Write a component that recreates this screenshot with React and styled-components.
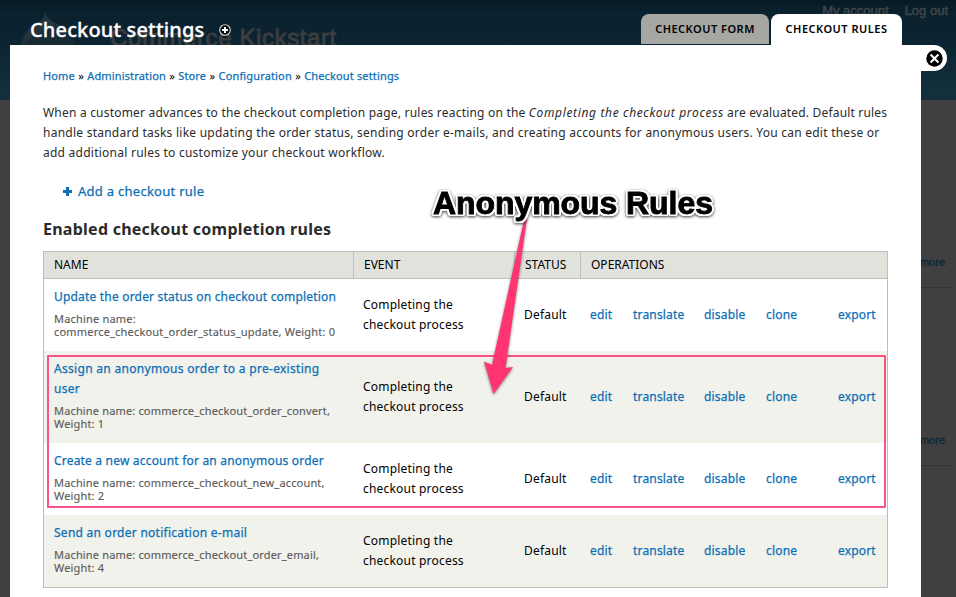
import React from 'react';
import styled, { createGlobalStyle } from 'styled-components';

const Global = createGlobalStyle`
  * { box-sizing: border-box; }
  body { margin: 0; font-family: "Noto Sans", "Open Sans", sans-serif; font-size: 12px; color: #000; overflow: hidden; }
`;

const Screen = styled.div`
  position: relative;
  width: 956px;
  height: 597px;
  overflow: hidden;
  background: #404040;
`;

/* Dimmed site behind the overlay */
const Backdrop = styled.div`
  position: absolute;
  inset: 0;
  font-family: "Liberation Sans", Arial, sans-serif;
`;
const SiteHeader = styled.div`
  position: relative;
  height: 100px;
  background: linear-gradient(#051a25 0, #0a212e 12px, #0c2533 45px, #14303f 100px);
`;
const SiteLogo = styled.svg`
  position: absolute;
  left: 18px;
  top: 11px;
`;
const SiteName = styled.div`
  position: absolute;
  left: 110px;
  top: 24px;
  font-size: 24px;
  line-height: 28px;
  letter-spacing: 0.6px;
  -webkit-text-stroke: 0.9px #3b3d3e;
  color: #3b3d3e;
  white-space: nowrap;
`;
const UserMenu = styled.div`
  position: absolute;
  right: 8px;
  top: 3px;
  display: flex;
  gap: 16px;
  font-size: 13px;
  line-height: 15px;
  color: #43484b;
  -webkit-text-stroke: 0.4px #43484b;
`;
const ReadMore = styled.div`
  position: absolute;
  left: 880px;
  top: ${(p) => p.$top}px;
  width: 70px;
  height: 32px;
  padding-right: 5px;
  border-bottom: 1px solid #333;
  text-align: right;
  font-size: 11px;
  line-height: 12px;
  color: #0b2636;
  -webkit-text-stroke: 0.3px #0b2636;
`;

/* Overlay window */
const Overlay = styled.div`
  position: absolute;
  left: 10px;
  top: 0;
  width: 937px;
  height: 597px;
  display: flex;
  flex-direction: column;
`;
const TitleBar = styled.header`
  display: flex;
  justify-content: space-between;
  height: 45px;
  padding: 14px 45px 0 20px;
`;
const TitleGroup = styled.div`
  display: flex;
  align-items: center;
  gap: 15px;
  height: 31px;
`;
const Title = styled.h1`
  margin: 0;
  font-size: 20px;
  line-height: 31px;
  font-weight: 500;
  letter-spacing: 0.14px;
  -webkit-text-stroke: 0.3px #fff;
  color: #fff;
`;
const Tabs = styled.nav`
  display: flex;
  gap: 2px;
`;
const Tab = styled.div`
  width: ${(p) => p.$width}px;
  height: ${(p) => (p.$active ? 31 : 30)}px;
  border-radius: 8px 8px 0 0;
  background: ${(p) => (p.$active ? '#fff' : '#a6a7a2')};
  text-align: center;
  font-size: 11px;
  line-height: 30px;
  font-weight: 600;
  letter-spacing: 0.5px;
  white-space: nowrap;
`;
const Body = styled.div`
  display: flex;
  flex: 1;
  align-items: flex-start;
`;
const Panel = styled.main`
  width: 911px;
  height: 552px;
  padding: 21px 33px 0;
  background: #fff;
`;
const CloseTab = styled.button`
  display: flex;
  align-items: center;
  justify-content: center;
  width: 26px;
  height: 26px;
  padding: 0;
  border: 0;
  border-radius: 0 13px 13px 0;
  background: #fff;
`;
const Breadcrumb = styled.nav`
  display: flex;
  gap: 3.3px;
  font-size: 11px;
  line-height: 20px;
  letter-spacing: 0.15px;
  white-space: nowrap;
`;
const Link = styled.a`
  color: #0d6fb6;
  -webkit-text-stroke: 0.25px #0d6fb6;
  white-space: nowrap;
`;
const Intro = styled.p`
  margin: 17px 0 0;
  line-height: 20px;
  color: #2b2b2b;
  white-space: nowrap;
  letter-spacing: 0.245px;
`;
const Emphasis = styled.em`
  letter-spacing: 0.65px;
`;
const Wide = styled.span`
  letter-spacing: ${(p) => p.$spacing}px;
`;
const AddAction = styled.div`
  display: flex;
  align-items: center;
  gap: 6px;
  margin: 18px 0 0 20px;
  height: 20px;
  font-size: 13px;
  letter-spacing: 0.27px;
`;
const Heading = styled.h3`
  margin: 17px 0 0;
  font-size: 16px;
  line-height: 22px;
  font-weight: 700;
  letter-spacing: 0.25px;
  color: #2b2b2b;
`;
const Table = styled.div`
  margin-top: 11px;
  width: 845px;
  border: 1px solid #bebfb9;
`;
const Row = styled.div`
  display: grid;
  grid-template-columns: 310px 161px 66px 1fr;
  align-items: center;
  background: ${(p) => (p.$striped ? '#f1f2eb' : '#fff')};
`;
const HeaderRow = styled(Row)`
  height: 27px;
  background: #e1e2dc;
  border-bottom: 1px solid #bebfb9;
  align-items: stretch;
`;
const HeaderCell = styled.div`
  padding-left: 10px;
  line-height: 26px;
  border-right: ${(p) => (p.$last ? '0' : '1px solid #bebfb9')};
`;
const NameCell = styled.div`
  padding: 8px 0 13px 10px;
`;
const RuleLink = styled(Link)`
  display: block;
  line-height: 20px;
  letter-spacing: ${(p) => p.$spacing}px;
`;
const Machine = styled.div`
  margin-top: 5px;
  font-size: 11px;
  line-height: 13px;
  letter-spacing: ${(p) => p.$spacing}px;
  color: #5c5c5a;
  -webkit-text-stroke: 0.15px #5c5c5a;
  white-space: pre;
`;
const Cell = styled.div`
  padding-left: 9px;
  line-height: 20px;
  letter-spacing: 0.2px;
  white-space: pre;
`;
const Operations = styled.div`
  display: grid;
  grid-template-columns: 43px 71px 62px 72px auto;
  padding-left: 9px;
  line-height: 20px;
  letter-spacing: 0.18px;
`;

/* Annotations drawn over the page */
const Highlight = styled.div`
  position: absolute;
  left: 47px;
  top: 355px;
  width: 839px;
  height: 153px;
  border: 2px solid #f65586;
  border-radius: 1px;
`;
const Arrow = styled.svg`
  position: absolute;
  left: 470px;
  top: 200px;
  overflow: visible;
  filter: drop-shadow(0 1px 1.5px rgba(0, 0, 0, 0.5));
`;
const Callout = styled.div`
  position: absolute;
  left: 433px;
  top: 184px;
  font: 700 32px/38px "Liberation Sans", Arial, sans-serif;
  letter-spacing: -0.07px;
  white-space: nowrap;
  color: #000;
  -webkit-text-stroke: 0.9px #000;
  text-shadow:
    2.4px 0 #fff, -2.4px 0 #fff, 0 2.4px #fff, 0 -2.4px #fff,
    1.7px 1.7px #fff, -1.7px 1.7px #fff, 1.7px -1.7px #fff, -1.7px -1.7px #fff,
    2.2px 0.9px #fff, -2.2px 0.9px #fff, 2.2px -0.9px #fff, -2.2px -0.9px #fff,
    0.9px 2.2px #fff, -0.9px 2.2px #fff, 0.9px -2.2px #fff, -0.9px -2.2px #fff;
  filter: drop-shadow(0 1px 1.5px rgba(0, 0, 0, 0.75));
`;

const crumbs = ['Home', 'Administration', 'Store', 'Configuration', 'Checkout settings'];
const rules = [
  { title: ['Update the order status on checkout completion'], machine: 'Machine name:\ncommerce_checkout_order_status_update, Weight: 0', spacing: 0.19, machineSpacing: 0.19 },
  { title: ['Assign an anonymous order to a pre-existing', 'user'], machine: 'Machine name: commerce_checkout_order_convert,\nWeight: 1', spacing: 0.3, machineSpacing: 0.16 },
  { title: ['Create a new account for an anonymous order'], machine: 'Machine name: commerce_checkout_new_account,\nWeight: 2', spacing: 0.19, machineSpacing: 0.16 },
  { title: ['Send an order notification e-mail'], machine: 'Machine name: commerce_checkout_order_email,\nWeight: 4', spacing: 0.26, machineSpacing: 0.16 },
];
const operations = ['edit', 'translate', 'disable', 'clone', 'export'];

export default function App() {
  return (
    <Screen>
      <Global />
      <Backdrop>
        <SiteHeader>
          <SiteLogo width="62" height="60" viewBox="0 0 62 60">
            <path d="M27 0C29 8 35 10 44 16C53 22 58 30 58 42V60H2V42C1 27 9 17 17 13C23 10 27 6 27 0Z" fill="#1a2a34" />
            <path d="M27 1C29 9 35 10 44 16C34 14 28 16 22 22C15 24 8 29 4 35C6 23 12 16 18 13C24 10 27 7 27 1Z" fill="#24343d" />
          </SiteLogo>
          <SiteName>Commerce Kickstart</SiteName>
          <UserMenu><span>My account</span><span>Log out</span></UserMenu>
        </SiteHeader>
        <ReadMore $top={256}>more</ReadMore>
        <ReadMore $top={434}>more</ReadMore>
      </Backdrop>

      <Overlay>
        <TitleBar>
          <TitleGroup>
            <Title>Checkout settings</Title>
            <svg width="12" height="12" viewBox="0 0 12 12">
              <circle cx="6" cy="6" r="5.3" fill="#000" stroke="#d8d8d8" strokeWidth="1.1" />
              <path d="M6 3v6M3 6h6" stroke="#fff" strokeWidth="2" />
            </svg>
          </TitleGroup>
          <Tabs>
            <Tab $width={128}>CHECKOUT FORM</Tab>
            <Tab $width={131} $active>CHECKOUT RULES</Tab>
          </Tabs>
        </TitleBar>
        <Body>
          <Panel>
            <Breadcrumb>
              {crumbs.map((c, i) => (
                <React.Fragment key={c}>
                  {i > 0 && <span>»</span>}
                  <Link>{c}</Link>
                </React.Fragment>
              ))}
            </Breadcrumb>
            <Intro>
              <Wide $spacing={0.2}>When a customer advances to the checkout completion page, rules reacting on the </Wide>
              <Emphasis>Completing the checkout process</Emphasis>
              <Wide $spacing={0.18}> are evaluated. Default rules</Wide><br />
              handle standard tasks like updating the order status, sending order e-mails, and creating accounts for anonymous users. You can edit these or<br />
              add additional rules to customize your checkout workflow.
            </Intro>
            <AddAction>
              <svg width="9" height="9" viewBox="0 0 9 9">
                <path d="M4.5 0v9M0 4.5h9" stroke="#0d6fb6" strokeWidth="3" />
              </svg>
              <Link>Add a checkout rule</Link>
            </AddAction>
            <Heading>Enabled checkout completion rules</Heading>
            <Table>
              <HeaderRow>
                <HeaderCell>NAME</HeaderCell>
                <HeaderCell>EVENT</HeaderCell>
                <HeaderCell>STATUS</HeaderCell>
                <HeaderCell $last>OPERATIONS</HeaderCell>
              </HeaderRow>
              {rules.map((r, i) => (
                <Row key={r.machine} $striped={i % 2 === 1}>
                  <NameCell>
                    {r.title.map((t) => <RuleLink key={t} $spacing={r.spacing}>{t}</RuleLink>)}
                    <Machine $spacing={r.machineSpacing}>{r.machine}</Machine>
                  </NameCell>
                  <Cell>{'Completing the\ncheckout process'}</Cell>
                  <Cell>Default</Cell>
                  <Operations>
                    {operations.map((o) => <Link key={o}>{o}</Link>)}
                  </Operations>
                </Row>
              ))}
            </Table>
          </Panel>
          <CloseTab aria-label="Close">
            <svg width="17" height="17" viewBox="0 0 17 17">
              <circle cx="8.5" cy="8.5" r="8.2" fill="#000" />
              <path d="M4.6 4.6l7.8 7.8M12.4 4.6l-7.8 7.8" stroke="#fff" strokeWidth="2.1" />
            </svg>
          </CloseTab>
        </Body>
      </Overlay>

      <Highlight />
      <Arrow width="60" height="200" viewBox="0 0 60 200">
        <path d="M54.5 18L57 18L35.5 168L43 167L23.5 194L14 161.5L22 165Z" fill="#ff3471" />
      </Arrow>
      <Callout>Anonymous Rules</Callout>
    </Screen>
  );
}
